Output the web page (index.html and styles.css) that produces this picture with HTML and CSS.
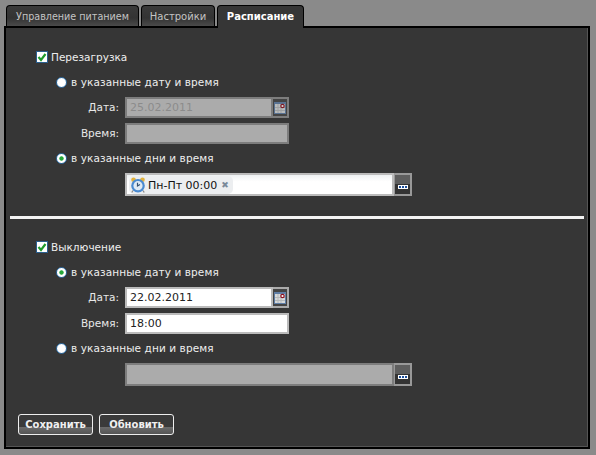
FILE: index.html
```html
<!DOCTYPE html>
<html lang="en">
<head>
    <meta charset="UTF-8">
    <title>Расписание</title>
    <link rel="stylesheet" href="styles.css">
</head>
<body>
    <svg class="defs" width="0" height="0">
        <symbol id="check" viewBox="0 0 12 12">
            <rect x="0.5" y="0.5" width="11" height="11" fill="#fff" stroke="#2b5f8f"/>
            <path d="M2.500 6 L5 9 L9.500 3" fill="none" stroke="#1f9a2c" stroke-width="2.200"/>
        </symbol>
        <symbol id="calendar" viewBox="0 0 12 12">
            <rect x="0" y="0" width="12" height="12" fill="#5f7ea6"/>
            <rect x="1" y="2" width="10" height="9" fill="#d6d9da"/>
            <path d="M1 5.500H11M1 8.500H11M4 2V11M7 2V11" stroke="#b4b8ba" stroke-width="1"/>
            <circle cx="8.500" cy="4" r="1.700" fill="#fff" stroke="#8c1020" stroke-width="1.200"/>
        </symbol>
        <symbol id="clock" viewBox="0 0 16 16">
            <circle cx="3.500" cy="2.800" r="2.300" fill="#e2b23c"/>
            <circle cx="12.500" cy="2.800" r="2.300" fill="#e2b23c"/>
            <path d="M3 13.500L1.800 15.500M13 13.500L14.200 15.500" stroke="#8a8a8a" stroke-width="1.300"/>
            <circle cx="8" cy="8.700" r="6.800" fill="#4a8ad0"/>
            <circle cx="8" cy="8.700" r="4.600" fill="#dfeaf5"/>
            <path d="M7.500 5.800V9L10 7.600" fill="none" stroke="#33506f" stroke-width="1.200"/>
        </symbol>
    </svg>

    <div class="tabs">
        <div class="tab tab-first">Управление питанием</div>
        <div class="tab tab-second">Настройки</div>
        <div class="tab active">Расписание</div>
    </div>

    <div class="panel">
        <div class="section">
            <div class="check-row">
                <svg class="check"><use href="#check"/></svg>
                <span>Перезагрузка</span>
            </div>
            <div class="radio-row first">
                <span class="radio"></span>
                <span>в указанные дату и время</span>
            </div>
            <div class="field-row">
                <label>Дата:</label>
                <div class="input disabled date">25.02.2011</div>
                <div class="cal-btn disabled-btn"><svg class="cal-icon dim"><use href="#calendar"/></svg></div>
            </div>
            <div class="field-row time">
                <label>Время:</label>
                <div class="input disabled wide"></div>
            </div>
            <div class="radio-row second">
                <span class="radio on"></span>
                <span>в указанные дни и время</span>
            </div>
            <div class="multi-row">
                <div class="multi">
                    <div class="chip">
                        <svg class="clock"><use href="#clock"/></svg>
                        <span class="chip-text">Пн-Пт 00:00</span>
                        <span class="chip-x">✖</span>
                    </div>
                </div>
                <div class="dots-btn"><div class="dots"><span></span><span></span><span></span></div></div>
            </div>
        </div>

        <div class="divider"></div>

        <div class="section section-off">
            <div class="check-row">
                <svg class="check"><use href="#check"/></svg>
                <span>Выключение</span>
            </div>
            <div class="radio-row first">
                <span class="radio on"></span>
                <span>в указанные дату и время</span>
            </div>
            <div class="field-row">
                <label>Дата:</label>
                <div class="input date">22.02.2011</div>
                <div class="cal-btn"><svg class="cal-icon"><use href="#calendar"/></svg></div>
            </div>
            <div class="field-row time">
                <label>Время:</label>
                <div class="input wide">18:00</div>
            </div>
            <div class="radio-row second">
                <span class="radio"></span>
                <span>в указанные дни и время</span>
            </div>
            <div class="multi-row">
                <div class="multi disabled"></div>
                <div class="dots-btn"><div class="dots"><span></span><span></span><span></span></div></div>
            </div>
        </div>

        <div class="buttons">
            <div class="btn">Сохранить</div>
            <div class="btn">Обновить</div>
        </div>
    </div>
</body>
</html>
```

FILE: styles.css
```css
html, body { margin: 0; padding: 0; }
body { width: 596px; height: 455px; overflow: hidden; background: #8a8a8a; font-family: "DejaVu Sans", sans-serif; font-size: 10.500px; color: #f0f0f0; }
.defs { display: block; height: 0; }

.tabs { display: flex; align-items: flex-start; height: 26px; padding: 5px 0 0 6px; box-sizing: border-box; position: relative; z-index: 1; }
.tab { height: 21px; line-height: 21px; box-sizing: border-box; border: 1px solid #000; border-bottom: none; border-radius: 4px 4px 0 0; background: linear-gradient(#3a3a3a, #333 60%, #4a4a4a); color: #c4c4c4; text-align: center; font-size: 9.600px; }
.tab-first { width: 133px; margin-right: 2px; }
.tab-second { width: 74px; margin-right: 2px; font-size: 10px; }
.tab.active { width: 87px; height: 23px; background: #363636; color: #fff; font-weight: bold; font-size: 10px; }

.panel { width: 586px; height: 423px; margin-left: 4px; box-sizing: border-box; border: 2px solid #000; background: #363636; box-shadow: inset -1px -1px 0 #555; padding: 0 6px; }

.section { height: 168px; box-sizing: border-box; padding-top: 20px; }
.section-off { height: 167px; padding-top: 19px; }
.check-row { display: flex; align-items: center; height: 18px; padding-left: 24px; gap: 3px; color: #eee; }
.check { width: 12px; height: 12px; }
.radio-row { display: flex; align-items: center; height: 18px; padding-left: 44px; gap: 5px; color: #eee; letter-spacing: 0.1px; }
.radio-row.first { margin-top: 7px; }
.radio-row.second { margin-top: 5px; }
.radio { width: 9px; height: 9px; border-radius: 50%; background: radial-gradient(circle at 50% 50%, #fff 55%, #b8cfe4 100%); border: 1px solid #2f6da3; margin-right: -1px; }
.radio.on { background: radial-gradient(circle, #25a83a 0 28%, #fff 40%); }

.field-row { display: flex; align-items: stretch; height: 21px; margin-top: 6px; padding-left: 54px; }
.field-row.time { margin-top: 5px; }
.field-row label { width: 53px; line-height: 21px; text-align: right; margin-right: 6px; color: #e8e8e8; }
.input { box-sizing: border-box; background: #fff; border: 2px solid #bbb; color: #222; padding-left: 3px; line-height: 17px; font-size: 11px; }
.input.date { width: 148px; }
.input.wide { width: 164px; }
.input.disabled { background: #ababab; border-color: #7d7d7d; color: #8b8b8b; }

.cal-btn { width: 16px; box-sizing: border-box; background: #444; border: 2px solid #aaa; border-left-width: 0; display: flex; align-items: center; justify-content: center; }
.disabled-btn { border-color: #7d7d7d; }
.cal-icon { width: 12px; height: 12px; }
.cal-icon.dim { opacity: 0.8; }

.multi-row { display: flex; height: 23px; margin-top: 6px; margin-left: 113px; width: 287px; }
.multi { flex: 1; box-sizing: border-box; background: linear-gradient(#eef1f2, #fff 35%); border: 2px solid #bbb; padding: 1px 2px; }
.multi.disabled { background: #ababab; border-color: #7d7d7d; }
.chip { display: inline-flex; align-items: center; height: 18px; padding: 0 4px 0 1px; background: #eceef0; border-radius: 5px; color: #111; }
.clock { width: 16px; height: 16px; margin-right: 2px; }
.chip-text { font-size: 11px; }
.chip-x { color: #7a8a9a; font-size: 9px; margin-left: 4px; }

.dots-btn { width: 18px; box-sizing: border-box; border: 2px solid #999; border-left-width: 1px; background: linear-gradient(#5e5e5e 45%, #333 45%); display: flex; align-items: flex-end; justify-content: center; padding-bottom: 5px; }
.dots { display: flex; gap: 1px; padding: 1px; background: #fff; }
.dots span { width: 2px; height: 2px; background: #1e4f9a; }

.divider { height: 3px; background: #f4f4f4; margin: 20px 0 0 -2px; width: 574px; }

.buttons { display: flex; gap: 6px; margin: 28px 0 0 6px; }
.btn { width: 75px; height: 21px; line-height: 19px; box-sizing: border-box; border: 1px solid #eee; border-radius: 3px; text-align: center; font-weight: bold; font-size: 10px; color: #f0f0f0; background: linear-gradient(#3a3a3a 65%, #6a6a6a 65%, #555); }
```
